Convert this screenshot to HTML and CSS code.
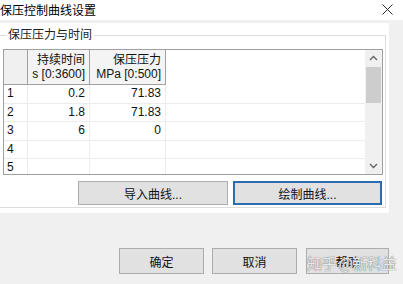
FILE: index.html
```html
<!DOCTYPE html>
<html>
  <head>
    <meta charset="utf-8">
    <title>保压控制曲线设置</title>
    <link rel="stylesheet" href="styles.css">
  </head>
  <body>
    <div class="titlebar">
      <span class="title">保压控制曲线设置</span>
      <svg class="close" width="11" height="11" viewBox="0 0 11 11">
        <path d="M0.5 0.5 L10.5 10.5 M10.5 0.5 L0.5 10.5" stroke="#2b2b2b" stroke-width="1" fill="none"/>
      </svg>
    </div>
    <div class="strip"></div>
    <div class="panel">
      <fieldset class="group">
        <legend>保压压力与时间</legend>
        <div class="grid">
          <table class="data">
            <tr class="head">
              <th class="corner"></th>
              <th class="col-time">持续时间<br>s [0:3600]</th>
              <th class="col-press">保压压力<br>MPa [0:500]</th>
              <th class="filler"></th>
            </tr>
            <tr><td class="num">1</td><td>0.2</td><td>71.83</td><td class="filler"></td></tr>
            <tr><td class="num">2</td><td>1.8</td><td>71.83</td><td class="filler"></td></tr>
            <tr><td class="num">3</td><td>6</td><td>0</td><td class="filler"></td></tr>
            <tr><td class="num">4</td><td></td><td></td><td class="filler"></td></tr>
            <tr><td class="num">5</td><td></td><td></td><td class="filler"></td></tr>
          </table>
          <div class="vscroll">
            <svg class="arrow" width="17" height="17" viewBox="0 0 17 17">
              <path d="M5 10 L8.5 6.5 L12 10" stroke="#606060" stroke-width="1.3" fill="none"/>
            </svg>
            <div class="thumb"></div>
            <div class="track"></div>
            <svg class="arrow" width="17" height="17" viewBox="0 0 17 17">
              <path d="M5 7 L8.5 10.5 L12 7" stroke="#606060" stroke-width="1.3" fill="none"/>
            </svg>
          </div>
        </div>
        <div class="actions">
          <button class="btn wide">导入曲线...</button>
          <button class="btn wide primary">绘制曲线...</button>
        </div>
      </fieldset>
    </div>
    <div class="footer">
      <button class="btn small">确定</button>
      <button class="btn small">取消</button>
      <button class="btn small help">帮助</button>
      <span class="watermark">知乎 @新科益</span>
    </div>
  </body>
</html>
```

FILE: styles.css
```css
body {
  margin: 0;
  background: #f0f0f0;
  font-family: "Liberation Sans", "Noto Sans CJK SC", sans-serif;
  font-size: 12px;
  color: #111;
  width: 403px;
  height: 284px;
  overflow: hidden;
  position: relative;
}

.titlebar {
  height: 20px;
  background: #fff;
  display: flex;
  align-items: center;
  justify-content: space-between;
  padding: 0 10px 2px 0;
  box-sizing: border-box;
}
.title {
  font-size: 12px;
  color: #000;
}
.close {
  display: block;
}

.strip {
  height: 3px;
  background: #f0f0f0;
}

.panel {
  width: 389px;
  background: #fff;
  padding: 5px 0 5px 0;
  box-sizing: border-box;
}

.group {
  margin: 0 3px 0 -1px;
  padding: 7px 2px 2px 3px;
  border: 1px solid #dcdcdc;
  min-width: 0;
}
.group legend {
  margin-left: 3px;
  padding: 0 2px;
  font-size: 12px;
  line-height: 14px;
  color: #222;
}

.grid {
  display: flex;
  height: 126px;
  border: 1px solid #a0a0a0;
  box-sizing: border-box;
  overflow: hidden;
  background: #fff;
}

.data {
  flex: 1;
  border-collapse: collapse;
  table-layout: fixed;
  align-self: flex-start;
}
.data th,
.data td {
  padding: 0 4px;
  text-align: right;
  white-space: nowrap;
  font-weight: normal;
  border-right: 1px solid #ececec;
  border-bottom: 1px solid #ececec;
}
.data td {
  height: 17.5px;
  line-height: 17px;
}
.data .head th {
  height: 34px;
  line-height: 14px;
  background: #f4f4f4;
  border-right: 1px solid #a0a0a0;
  border-bottom: 1px solid #a0a0a0;
  vertical-align: middle;
}
.data .head th.corner {
  background: #f0f0f0;
}
.data .head th.filler {
  background: #fff;
  border: none;
}
.corner { width: 15px; }
.col-time { width: 53px; }
.col-press { width: 67px; }
.data td.num {
  text-align: left;
  padding-left: 3px;
}
.data td.filler {
  border-right: none;
}

.vscroll {
  width: 17px;
  background: #f0f0f0;
  display: flex;
  flex-direction: column;
}
.arrow {
  display: block;
  flex: none;
}
.thumb {
  height: 36px;
  margin: 0 1px;
  background: #cdcdcd;
  flex: none;
}
.track {
  flex: 1;
}

.actions {
  display: flex;
  justify-content: flex-end;
  gap: 5px;
  margin-top: 6px;
  padding-right: 1px;
}

.btn {
  font-family: "Liberation Sans", "Noto Sans CJK SC", sans-serif;
  font-size: 12px;
  color: #111;
  background: #e1e1e1;
  border: 1px solid #adadad;
  padding: 0;
  height: 24px;
  box-sizing: border-box;
}
.wide { width: 150px; }
.primary {
  width: 149px;
  border: 2px solid #2a6cad;
}

.footer {
  display: flex;
  justify-content: flex-end;
  gap: 8px;
  padding: 35px 14px 0 0;
}
.small {
  width: 85px;
  height: 26px;
}
.help {
  width: 83px;
  margin-left: 1px;
}

.watermark {
  position: absolute;
  left: 307px;
  top: 252px;
  font-family: "Noto Sans CJK SC", sans-serif;
  font-size: 15px;
  color: rgba(255, 255, 255, 0.85);
  text-shadow: 0 0 1px #777, 0 0 1px #777;
  letter-spacing: -0.5px;
}
```
